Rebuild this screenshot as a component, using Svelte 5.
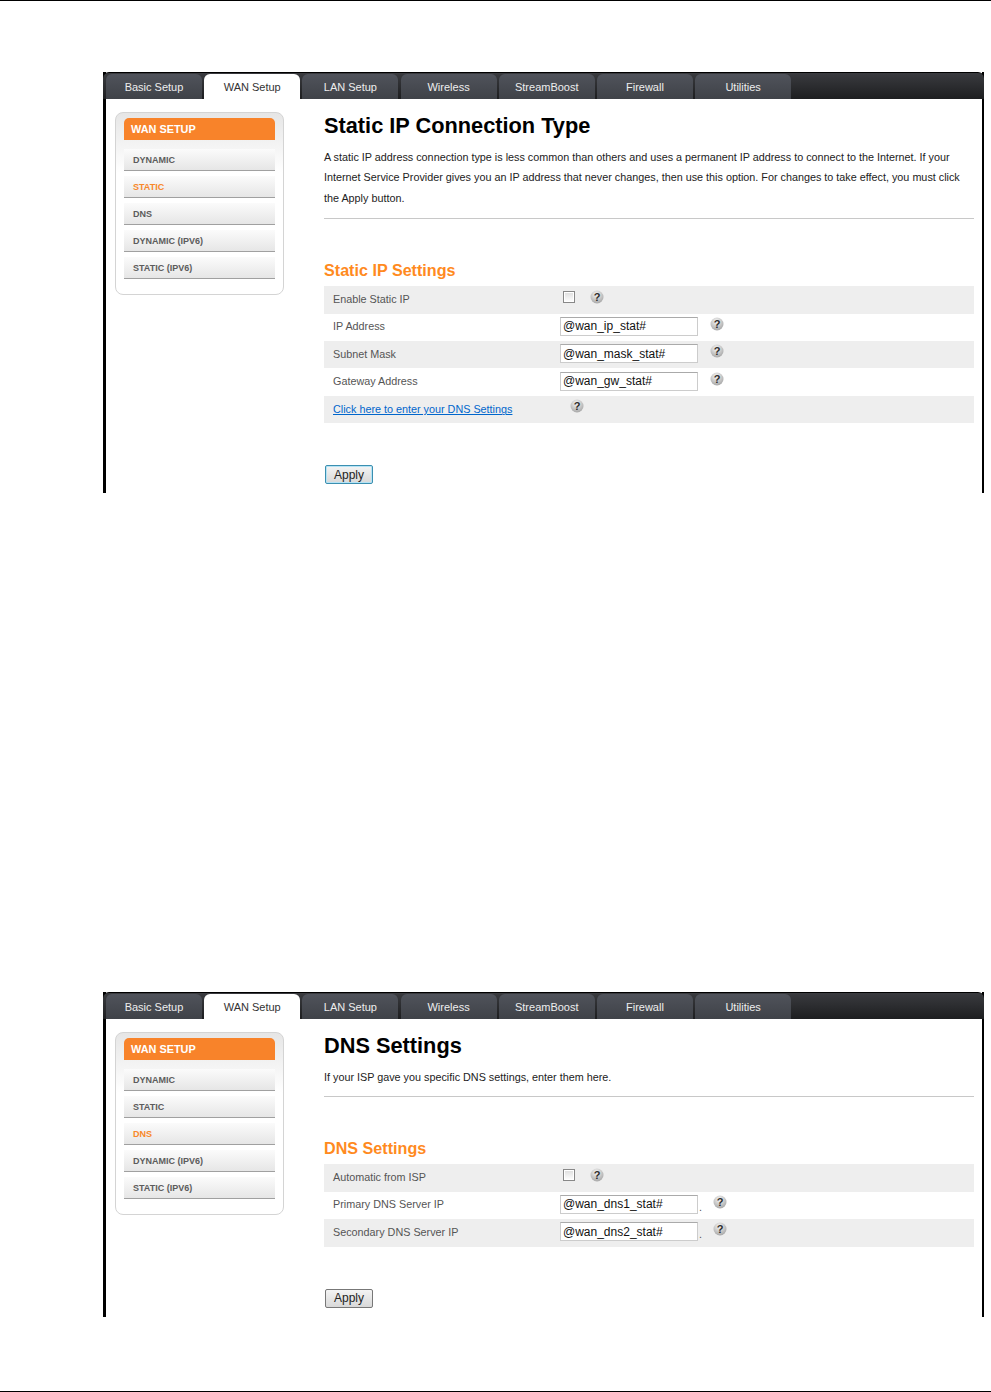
<script>
  const tabs = ["Basic Setup", "WAN Setup", "LAN Setup", "Wireless", "StreamBoost", "Firewall", "Utilities"];
  const sideItems = ["DYNAMIC", "STATIC", "DNS", "DYNAMIC (IPV6)", "STATIC (IPV6)"];
</script>

{#snippet help()}
  <svg class="help" width="14" height="14" viewBox="0 0 14 14">
    <defs>
      <radialGradient id="hg" cx="0.45" cy="0.3" r="0.75">
        <stop offset="0" stop-color="#f6f6f6" />
        <stop offset="1" stop-color="#a2a2a2" />
      </radialGradient>
    </defs>
    <circle cx="7" cy="7" r="6.5" fill="url(#hg)" />
    <text x="7" y="10.8" text-anchor="middle" class="help-mark">?</text>
  </svg>
{/snippet}

{#snippet frame(active)}
  <div class="tabbar">
    {#each tabs as tab}
      <div class="tab" class:on={tab === "WAN Setup"}>{tab}</div>
    {/each}
  </div>
  <div class="side">
    <div class="side-title">WAN SETUP</div>
    {#each sideItems as item}
      <div class="side-item" class:current={item === active}>{item}</div>
    {/each}
  </div>
{/snippet}

<div class="page">
  <section class="frame first">
    {@render frame("STATIC")}
    <div class="main">
      <h1>Static IP Connection Type</h1>
      <p class="intro">A static IP address connection type is less common than others and uses a permanent IP address to connect to the Internet. If your Internet Service Provider gives you an IP address that never changes, then use this option. For changes to take effect, you must click the Apply button.</p>
      <hr />
      <h2>Static IP Settings</h2>
      <div class="rows">
        <div class="row shade">
          <span class="label">Enable Static IP</span>
          <span class="check"></span>
          {@render help()}
        </div>
        <div class="row">
          <span class="label">IP Address</span>
          <input value="@wan_ip_stat#" />
          <span class="h-in">{@render help()}</span>
        </div>
        <div class="row shade">
          <span class="label">Subnet Mask</span>
          <input value="@wan_mask_stat#" />
          <span class="h-in">{@render help()}</span>
        </div>
        <div class="row">
          <span class="label">Gateway Address</span>
          <input value="@wan_gw_stat#" />
          <span class="h-in">{@render help()}</span>
        </div>
        <div class="row shade">
          <a class="dns-link" href="#dns">Click here to enter your DNS Settings</a>
          {@render help()}
        </div>
      </div>
      <button class="apply focus">Apply</button>
    </div>
  </section>

  <section class="frame second">
    {@render frame("DNS")}
    <div class="main">
      <h1>DNS Settings</h1>
      <p class="intro">If your ISP gave you specific DNS settings, enter them here.</p>
      <hr />
      <h2>DNS Settings</h2>
      <div class="rows">
        <div class="row shade">
          <span class="label">Automatic from ISP</span>
          <span class="check"></span>
          {@render help()}
        </div>
        <div class="row">
          <span class="label">Primary DNS Server IP</span>
          <input value="@wan_dns1_stat#" />
          <span class="dot">.</span>
          {@render help()}
        </div>
        <div class="row shade">
          <span class="label">Secondary DNS Server IP</span>
          <input value="@wan_dns2_stat#" />
          <span class="dot">.</span>
          {@render help()}
        </div>
      </div>
      <button class="apply">Apply</button>
    </div>
  </section>
</div>

<style>
  :global(body) {
    margin: 0;
    background: #fff;
    font-family: "Liberation Sans", Arial, sans-serif;
  }

  .page {
    height: 1390px;
    border-top: 1px solid #000;
    border-bottom: 1px solid #000;
    padding-left: 103px;
  }

  .frame {
    width: 876px;
    border-left: 3px solid #000;
    border-right: 2px solid #000;
    display: grid;
    grid-template-columns: 218px 1fr;
    grid-template-rows: 27px 1fr;
  }
  .first {
    margin-top: 71px;
    height: 421px;
  }
  .second {
    margin-top: 499px;
    height: 325px;
  }

  .tabbar {
    grid-column: 1 / 3;
    display: flex;
    gap: 2.2px;
    align-items: flex-end;
    height: 25px;
    margin: 0 -2px 0 -3px;
    padding: 1px 0 0 3px;
    border-top: 1px solid #000;
    border-radius: 6px 6px 0 0;
    background: linear-gradient(#3a3b3f, #1d1e20);
  }
  .tab {
    width: 96px;
    height: 25px;
    line-height: 27px;
    text-align: center;
    font-size: 11px;
    color: #eee;
    background: linear-gradient(#50535b, #3f4248);
    border-radius: 6px 6px 0 0;
  }
  .tab.on {
    color: #333;
    background: #fff;
  }

  .side {
    margin: 13px 0 0 9px;
    width: 151px;
    height: 176px;
    padding: 5px 8px 0;
    border: 1px solid #d4d4d4;
    border-radius: 8px;
    background: linear-gradient(#e6e6e6, #fff 60px);
  }
  .side-title {
    height: 22px;
    line-height: 23px;
    padding-left: 7px;
    font-size: 10.9px;
    font-weight: bold;
    color: #fff;
    background: #f8832a;
    border-radius: 5px 5px 0 0;
    margin-bottom: 9px;
  }
  .side-item {
    height: 21px;
    line-height: 23px;
    margin-bottom: 5px;
    padding-left: 9px;
    font-size: 9px;
    font-weight: bold;
    color: #5c5c5c;
    background: linear-gradient(#fbfbfb, #e6e6e6);
    border-bottom: 1px solid #a0a0a0;
  }
  .side-item.current {
    color: #f8882a;
  }

  .main {
    padding: 0 8px 0 0;
    min-width: 0;
  }
  h1 {
    margin: 14px 0 0;
    font-size: 21.75px;
    line-height: 26px;
    font-weight: bold;
    color: #000;
  }
  .intro {
    margin: 8px 0 0;
    font-size: 10.8px;
    line-height: 20.4px;
    color: #222;
  }
  hr {
    margin: 10px 0 0;
    border: 0;
    border-top: 1px solid #c8c8c8;
  }
  h2 {
    margin: 42px 0 0;
    font-size: 16.15px;
    line-height: 19px;
    font-weight: bold;
    color: #ff8a1e;
  }
  .second hr {
    margin-top: 9px;
  }

  .rows {
    margin-top: 6px;
  }
  .row {
    height: 27.4px;
    display: flex;
    align-items: center;
    font-size: 10.8px;
    color: #555;
  }
  .shade {
    background: #eee;
  }
  .label {
    width: 227px;
    margin-top: -2px;
    padding-left: 9px;
    flex: none;
  }
  .check {
    width: 10px;
    height: 10px;
    margin: -5px 0 0 3px;
    border: 1px solid #888;
    background: linear-gradient(#ddd, #fff);
    box-shadow: inset 0 0 0 1px #fff;
  }
  .check + :global(.help) {
    margin: -5px 0 0 15px;
  }
  .second .check {
    margin-top: -7px;
  }
  .second .check + :global(.help) {
    margin-top: -7px;
  }
  input {
    width: 132px;
    height: 15px;
    margin: -2px 0 0;
    padding: 1px 2px;
    border: 1px solid #ccc;
    border-top-color: #aaa;
    background: #fff;
    font: 12px "Liberation Sans", Arial, sans-serif;
    color: #111;
  }
  .h-in {
    display: flex;
    margin: -7px 0 0 12px;
  }
  .dot {
    margin: 3px 0 0 1px;
    width: 2px;
  }
  .dot + :global(.help) {
    margin: -7px 0 0 12px;
  }
  .dns-link {
    padding-left: 9px;
    width: 237px;
    flex: none;
    color: #0066cc;
    white-space: nowrap;
  }
  .dns-link + :global(.help) {
    margin: -7px 0 0 0;
  }
  .help {
    flex: none;
  }
  .help-mark {
    font-size: 11px;
    font-weight: bold;
    fill: #2c2c2c;
  }

  .apply {
    display: block;
    margin: 42px 0 0 1px;
    width: 48px;
    height: 19px;
    padding: 0;
    font: 12px "Liberation Sans", Arial, sans-serif;
    color: #222;
    border: 1px solid #777;
    border-radius: 2px;
    background: linear-gradient(#f4f4f4, #d8d8d8);
  }
  .apply.focus {
    border-color: #3b8fb0;
    box-shadow: inset 0 0 0 1px #b5e3f5;
  }
</style>
